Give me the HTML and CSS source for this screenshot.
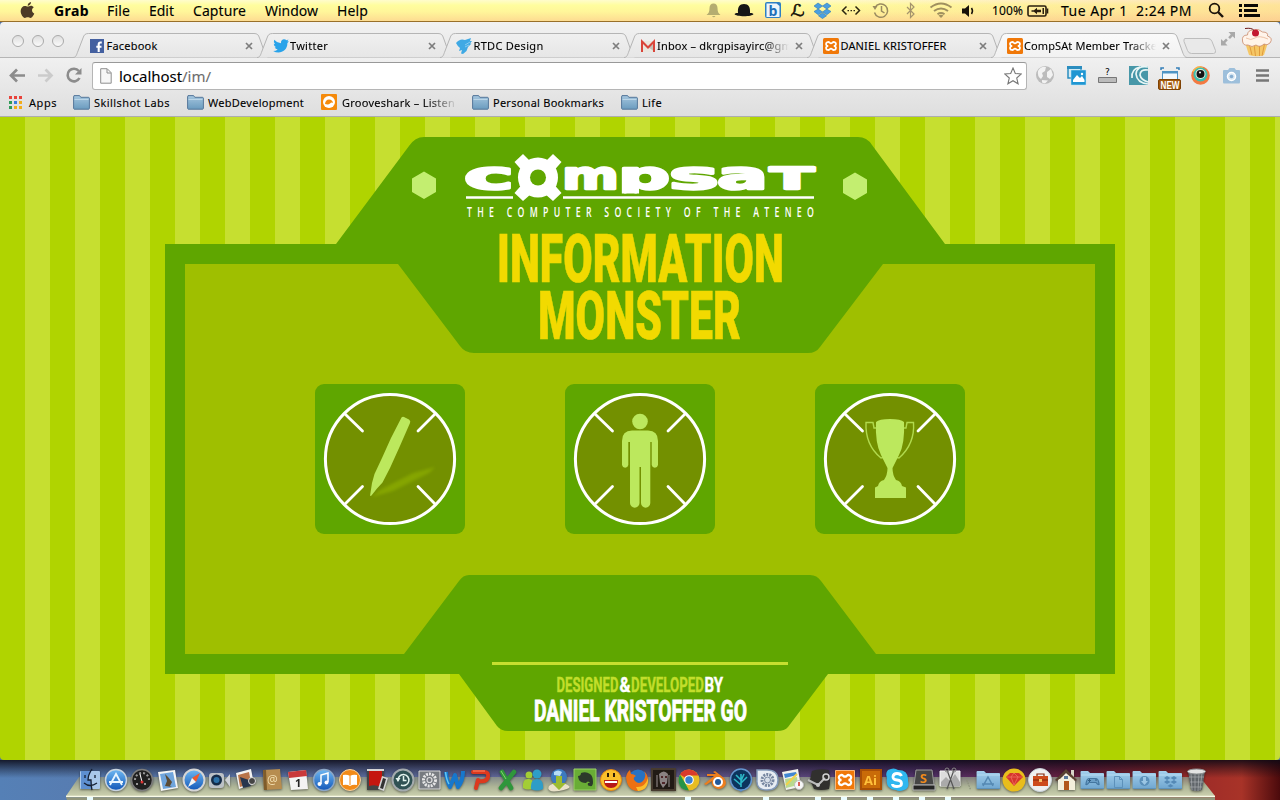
FILE: index.html
```html
<!DOCTYPE html>
<html lang="en">
<head>
<meta charset="utf-8">
<title>CompSAt Member Tracker</title>
<link rel="stylesheet" href="styles.css">
</head>
<body>
<svg class="defs" width="0" height="0">
  <defs>
    <linearGradient id="gFolder" x1="0" y1="0" x2="0" y2="1"><stop offset="0" stop-color="#a5c6de"/><stop offset="1" stop-color="#6b9cbf"/></linearGradient>
    <linearGradient id="gDockFolder" x1="0" y1="0" x2="0" y2="1"><stop offset="0" stop-color="#a4cfec"/><stop offset="1" stop-color="#6fa6cf"/></linearGradient>
    <linearGradient id="gTab" x1="0" y1="0" x2="0" y2="1"><stop offset="0" stop-color="#f0f0f0"/><stop offset="1" stop-color="#e6e6e6"/></linearGradient>
    <linearGradient id="gTabOn" x1="0" y1="0" x2="0" y2="1"><stop offset="0" stop-color="#fafafa"/><stop offset="1" stop-color="#f1f1f1"/></linearGradient>
    <linearGradient id="gBlue" x1="0" y1="0" x2="0" y2="1"><stop offset="0" stop-color="#6fb8f2"/><stop offset="1" stop-color="#1257b8"/></linearGradient>
    <linearGradient id="gShelf" x1="0" y1="0" x2="0" y2="1"><stop offset="0" stop-color="#8d9486" stop-opacity=".8"/><stop offset=".5" stop-color="#adb496"/><stop offset="1" stop-color="#cbd0ae"/></linearGradient>
    <symbol id="folder" viewBox="0 0 17 15"><path d="M.6 13.400V2l.4-1.400h5.600l1.200 1.700h8l.6.800v10.300l-.6.800H1.200z" fill="url(#gFolder)" stroke="#55779a" stroke-width="1"/><path d="M1.500 4.500h14" stroke="#bcd6e8"/></symbol>
    <symbol id="xampp" viewBox="0 0 16 16"><rect width="16" height="16" rx="1.500" fill="#f07808"/><path d="M5.200 8a2 2 0 1 1 1.400-3.300q1.400 1.300 2.800 0A2 2 0 1 1 10.800 8a2 2 0 1 1-1.400 3.300q-1.400-1.300-2.800 0A2 2 0 1 1 5.200 8z" fill="none" stroke="#fff" stroke-width="1.800"/></symbol>
    <symbol id="tab" viewBox="0 0 198 26"><path d="M0 24.500C3 24.500 3.500 22 5 18L10 5C11 2 12 .5 15.500 .5H181c3.500 0 4.500 1.500 5.500 4.500L191.500 19c1.500 4 2.500 5.500 5 5.500" stroke="#b5b5b5"/></symbol>
    <symbol id="close" viewBox="0 0 8 8"><path d="M1 1l6 6M7 1L1 7" stroke="#7d7d7d" stroke-width="1.700"/></symbol>
    <symbol id="scope" viewBox="0 0 150 150"><circle cx="75" cy="75" r="64.600" fill="#739000" stroke="#fff" stroke-width="3"/><path d="M30 30l17.500 17M120 30l-17 17M30 120l17.500-17.500M120 120l-17-17.500" stroke="#fff" stroke-width="2.800" stroke-linecap="round"/></symbol>
    <symbol id="dockFolder" viewBox="0 0 26 26"><path d="M1.500 5q0-1 1-1h6.500l2 2h13q1 0 1 1v14q0 1-1 1H2.500q-1 0-1-1z" fill="url(#gDockFolder)"/><path d="M2 8h23" stroke="#b7dcf2"/><path d="M2 21.500h23" stroke="#5f93bb"/></symbol>
  </defs>
</svg>

<header class="menubar">
  <svg class="apple" viewBox="0 0 16 18"><path d="M11.800 0c.1 2-1.700 4-3.600 4C8 2.200 9.800.2 11.800 0zM8.300 4.800c.9 0 1.900-.9 3.300-.9 1.200 0 2.400.7 3.100 1.700-2.800 1.700-2.300 5.400.5 6.600-.6 1.700-2.300 4.800-4 4.800-1.200 0-1.600-.7-3-.7s-1.900.7-3 .7C3.200 17 .700 12.900.700 9.600c0-3.400 2.200-5.500 4.400-5.500 1.300 0 2.300.7 3.200.7z" fill="#4d3b26"/></svg>
  <nav class="menus">
    <b data-w="35">Grab</b><span data-w="23">File</span><span data-w="25">Edit</span><span data-w="53">Capture</span><span data-w="53">Window</span><span data-w="31">Help</span>
  </nav>
  <svg class="status" viewBox="700 0 280 22">
    <path d="M713.500 3.500c2.500 0 4 2 4 4.500 0 4 1 5.500 3 7h-14c2-1.500 3-3 3-7 0-2.500 1.500-4.500 4-4.500zM712 16h3.500q-1.700 2.500-3.500 0z" fill="#b5ad70"/>
    <path d="M738 13C737.500 7 739.500 4 744 4s6.500 3 6 9c2 0 3 .5 3.500 1-1 3-18 3-19 0 .500-.5 1.500-1 3.500-1z" fill="#161616"/>
    <rect x="765" y="2" width="16" height="16" rx="2" fill="#2f80c3"/><path d="M766.500 17h13V6l-3-2.500h-10z" fill="#fff" opacity=".92"/><text x="768.500" y="15.500" class="bglyph">b</text>
    <text x="790.500" y="16" class="lglyph" textLength="14" lengthAdjust="spacingAndGlyphs">ℒ</text>
    <path d="M818 3l4.500 3-4.300 3-4.200-3zM827 3l4 3-4.200 3-4.300-3zM814 11.500l4.200-2.500 4.300 3-4.200 2.800zM831 11.500L826.800 9l-4.300 3 4.300 2.800zM822.500 13l4 2.800-4 2.700-4-2.700z" fill="#4a9fe0" stroke="#2a78b8" stroke-width=".6"/>
    <path d="M846.500 6.500l-4 4 4 4M855.500 6.500l4 4-4 4" fill="none" stroke="#2b2510" stroke-width="1.500"/><path d="M847.500 10h1.500v1.200h-1.500zm3 0h1.500v1.200h-1.500zm3 0h1.500v1.200h-1.500z" fill="#2b2510"/>
    <path d="M875 7.500a6.700 6.700 0 1 1-.5 5M881.500 6v5l3 2" fill="none" stroke="#9a8b60" stroke-width="1.500"/><path d="M872.500 6h5l-2.500 4z" fill="#9a8b60"/>
    <path d="M907 7l7 7-3.500 3.500v-14L914 7l-7 7" fill="none" stroke="#a5946c" stroke-width="1.200"/>
    <path d="M930.500 7.500q10.500-8 21 0M934 11q7-5 14 0M937.500 14.200q3.500-2.500 7 0" fill="none" stroke="#a0905f" stroke-width="2"/><path d="M938.500 15.500q2.500-1.500 5 0L941 18z" fill="#a0905f"/>
    <path d="M962 8.500h3L969 5v12l-4-3.500h-3z" fill="#161009"/><path d="M971.500 8q2 3 0 6" fill="none" stroke="#161009" stroke-width="1.500"/>
  </svg>
  <span class="pct" data-w="31">100%</span>
  <svg class="battery" viewBox="0 0 22 12"><rect x="1" y="1" width="18" height="10" rx="1.500" fill="none" stroke="#2a1e0e" stroke-width="1.600"/><path d="M20.500 3.500v5" stroke="#2a1e0e" stroke-width="1.600"/><path d="M4.500 5.300H7L10 2.800v2h4v2.400h-4v2L7 6.700H4.500z" fill="#2a1e0e"/><path d="M15.500 3h1.500v6h-1.500z" fill="#2a1e0e"/></svg>
  <span class="clock" data-w="131">Tue Apr 1&nbsp; 2:24 PM</span>
  <svg class="tools" viewBox="1208 0 54 22"><circle cx="1214.500" cy="8.500" r="4.800" fill="none" stroke="#1c140b" stroke-width="1.800"/><path d="M1218 12l5 5" stroke="#1c140b" stroke-width="2.400"/><path d="M1239 5.500h3m2 0h14m-19 5h3m2 0h13m-18 5h3m2 0h16" stroke="#0c0905" stroke-width="2.800"/></svg>
</header>

<section class="chrome">
  <div class="tabstrip">
    <div class="lights"><i></i><i></i><i></i></div>
    <div class="tabs">
      <div class="tab"><svg class="shape"><use href="#tab" fill="url(#gTab)"/></svg>
        <svg class="fav" viewBox="0 0 16 16"><rect x="1" y="1" width="14" height="14" fill="#4460a0"/><path d="M12.800 4.500h-1.300q-1.800 0-1.800 2V14M7.300 8.800h5.200" fill="none" stroke="#fff" stroke-width="2.100"/></svg>
        <p><span data-w="51">Facebook</span></p><svg class="x"><use href="#close"/></svg></div>
      <div class="tab"><svg class="shape"><use href="#tab" fill="url(#gTab)"/></svg>
        <svg class="fav" viewBox="0 0 16 16"><path d="M16 3.600q-.800.8-1.600 1.400C14.500 11 10 14.500 5.500 14.500q-3 0-5.300-1.500 2.800 0 4.500-1.500-2.300-.300-3-2.300h1.400Q.700 8 .700 5.800l1.400.400Q0 4.300 1.200 1.700 4 5 8 5.200C7.600 2.500 9.500 1.300 11 1.300q1.500 0 2.500 1l2-.700-1.200 1.700z" fill="#29a3ea"/></svg>
        <p><span data-w="38">Twitter</span></p><svg class="x"><use href="#close"/></svg></div>
      <div class="tab"><svg class="shape"><use href="#tab" fill="url(#gTab)"/></svg>
        <svg class="fav" viewBox="0 0 16 16"><path d="M0 5q4-5 9-3l6-2-1 3h2l-2 2.500h1.500L12 9l-1.500 4L7 16l-2-.500 1-3.500-3 1 1-3Q2 9 0 5z" fill="#3fa9e4"/><path d="M9 7l5-3M9 9l4-2" stroke="#9bd6f6" fill="none" stroke-width=".8"/></svg>
        <p><span data-w="70">RTDC Design</span></p><svg class="x"><use href="#close"/></svg></div>
      <div class="tab"><svg class="shape"><use href="#tab" fill="url(#gTab)"/></svg>
        <svg class="fav" viewBox="0 0 16 16"><path d="M1 3h14v11H1z" fill="#e9e6df"/><path d="M8 9l7 5V5z" fill="#c4c0b8"/><path d="M2 14V3.500l6 6 6-6V14" fill="none" stroke="#d9453a" stroke-width="2"/></svg>
        <p><span data-w="135">Inbox – dkrgpisayirc@gm</span></p><svg class="x"><use href="#close"/></svg></div>
      <div class="tab"><svg class="shape"><use href="#tab" fill="url(#gTab)"/></svg>
        <svg class="fav"><use href="#xampp"/></svg>
        <p><span data-w="106">DANIEL KRISTOFFER</span></p><svg class="x"><use href="#close"/></svg></div>
      <div class="tab on"><svg class="shape"><use href="#tab" fill="url(#gTabOn)"/></svg>
        <svg class="fav"><use href="#xampp"/></svg>
        <p><span data-w="133">CompSAt Member Tracke</span></p><svg class="x"><use href="#close"/></svg></div>
    </div>
    <svg class="corner" viewBox="1180 22 100 36">
      <path d="M1186 38.500h22q3 0 4 3l3.500 9q.500 3-2 3h-22q-3 0-4-3l-3.500-9q-.500-3 1-3z" fill="#e9e9e9" stroke="#bdbdbd"/>
      <path d="M1235 32v6.500l-2.300-2.200-2.700 2.700-1.800-1.800 2.600-2.600L1228.500 32zM1221 45.500v-6.500l2.300 2.200 2.700-2.700 1.800 1.800-2.600 2.600 2.300 2.600z" fill="#a9a9a9"/>
      <path d="M1244.500 41l4.500 14q8 2.500 15 0l4.500-14z" fill="#f5c766"/><path d="M1249 43l3 12m2-11l1.500 12m4-11v11m5-12l-2.500 12" stroke="#e09b3d" fill="none"/>
      <path d="M1242.500 41q-1-6 5-6 0-5 6-5 5-2 9 2 6 0 5 4 6 2 2.500 7-3 3-6 1-4 4-8 1-4 3-8 0-5 1-5.500-4z" fill="#fff4ea" stroke="#c98a6c" stroke-width=".8"/><path d="M1246 38q5 3 9 0t13 1" stroke="#edc4a9" fill="none"/>
      <circle cx="1255.500" cy="33" r="3.500" fill="#c3182f"/><path d="M1245 28.500q7-1 9 2" stroke="#6d1a1a" fill="none"/>
    </svg>
  </div>

  <div class="toolbar">
    <svg class="nav" viewBox="0 60 92 30">
      <path d="M11 75.500h14M17 69.500l-6 6 6 6" fill="none" stroke="#8c8c8c" stroke-width="2.700"/>
      <path d="M38 75.500h13M45.500 69.500l6 6-6 6" fill="none" stroke="#cbcbcb" stroke-width="2.700"/>
      <path d="M78.800 71A6.300 6.300 0 1 0 79.500 78" fill="none" stroke="#8c8c8c" stroke-width="2.600"/><path d="M81.500 68v6.500H75z" fill="#8c8c8c"/>
    </svg>
    <div class="omnibox">
      <svg class="doc" viewBox="0 0 12 16"><path d="M.7.7h6.500l4 4v10.500H.7z" fill="#f7f7f7" stroke="#8f8f8f"/><path d="M7 1v4h4" fill="none" stroke="#8f8f8f"/></svg>
      <p class="url"><span data-w="92">localhost<em>/im/</em></span></p>
      <svg class="star" viewBox="0 0 18 18"><path d="M9 1l2.300 5.500 6 .500-4.600 4 1.400 5.800L9 13.700l-5.100 3.100L5.300 11 .700 7l6-.500z" fill="#fff" stroke="#777" stroke-width="1.100"/></svg>
    </div>
    <svg class="exts" viewBox="1027 60 253 32">
      <circle cx="1045" cy="75" r="9" fill="#bcbcbc"/><path d="M1038 71q3-5 8-4l-1 4-3 2 1 3-2 3q-4-3-3-8zM1047 72l4-3 2 6-3 4-3-2zM1042 80l6 .500-3 3-3-1z" fill="#f2f2f2"/>
      <path d="M1068 67h13v11h-13z" fill="#d5ebf4" stroke="#2a8dbf" stroke-width="1.500"/><path d="M1067 66h15v3h-15z" fill="#2a8dbf"/><path d="M1071 70h15v15h-15z" fill="#1f96d2" stroke="#bfe4f5" stroke-width=".5"/><path d="M1073 82v-2l4-5 3 3 2-2 2.500 4v2z" fill="#fff"/><circle cx="1082" cy="74" r="1.200" fill="#fff"/>
      <text x="1105" y="75" class="qglyph">?</text><path d="M1098.500 77.500h18v5h-18z" fill="#bbb" stroke="#777"/>
      <path d="M1129 66h19v19h-19z" fill="#4797a8"/><path d="M1148 67q-11-2-12 7 1 9 12 10M1148 70q-8-1-8 5 1 5 8 7M1140 67q-9 2-8 11" fill="none" stroke="#e8f6f6" stroke-width="1.700"/>
      <path d="M1161 70v-2h3m12 0h3v2" fill="none" stroke="#347fb8" stroke-width="1.500"/><path d="M1162.500 71.500h15v8h-15z" fill="#f4f8fb" stroke="#4f94c4"/><path d="M1162 71h16v2.500h-16z" fill="#4f94c4"/><rect x="1158.500" y="79.500" width="22" height="10" rx="1.500" fill="#a35a0d" stroke="#7e4205"/><text x="1160.500" y="88.500" class="newtag" textLength="19" lengthAdjust="spacingAndGlyphs">NEW</text>
      <circle cx="1200.500" cy="75.500" r="9.300" fill="#f37a42"/><path d="M1192 72q4-8 11-5l-2 4z" fill="#f9b44a"/><circle cx="1200.500" cy="74.500" r="7" fill="#3fbfae"/><circle cx="1200.500" cy="74" r="5" fill="#e8efe0"/><circle cx="1200.500" cy="74" r="4" fill="#131313"/><circle cx="1200" cy="72.500" r="1" fill="#fff"/>
      <path d="M1223 71q0-1 1-1h4l1.500-2h5l1.500 2h3q1 0 1 1v11q0 1.500-1 1.500h-15q-1 0-1-1.500z" fill="#9dbfdb"/><circle cx="1231.500" cy="76.500" r="4" fill="#d6e6f2" stroke="#fff" stroke-width="1.500"/><circle cx="1231.500" cy="76.500" r="1.800" fill="#86add0"/>
      <path d="M1256 70.500h13m-13 5h13m-13 5h13" stroke="#777" stroke-width="2.600"/>
    </svg>
  </div>

  <div class="bookmarks">
    <svg class="apps" viewBox="0 0 13 13"><path d="M0 0h3v3H0zM5 0h3v3H5zM10 0h3v3h-3z" fill="#e8423a"/><path d="M0 5h3v3H0z" fill="#2f9b57"/><path d="M5 5h3v3H5z" fill="#3a7ddb"/><path d="M10 5h3v3h-3zM5 10h3v3H5zM10 10h3v3h-3z" fill="#f2ac1a"/><path d="M0 10h3v3H0z" fill="#2f9b57"/></svg>
    <span class="bm apps-t" data-w="28">Apps</span>
    <svg class="fold"><use href="#folder"/></svg><span class="bm" data-w="76">Skillshot Labs</span>
    <svg class="fold"><use href="#folder"/></svg><span class="bm" data-w="96">WebDevelopment</span>
    <svg class="groove" viewBox="0 0 16 16"><rect width="16" height="16" rx="1" fill="#f58a0b"/><circle cx="8" cy="8" r="6" fill="#fff"/><path d="M4 10q.5-4.500 4-4.500T12 9q-1.500-1-3 .5T4 10z" fill="#f58a0b"/></svg><span class="bm cut"><span data-w="113">Grooveshark – Listen</span></span>
    <svg class="fold"><use href="#folder"/></svg><span class="bm" data-w="111">Personal Bookmarks</span>
    <svg class="fold"><use href="#folder"/></svg><span class="bm" data-w="20">Life</span>
  </div>
</section>

<main class="page">
  <svg class="frame" viewBox="0 117 1280 643">
    <path d="M165 244H336L409 146Q415 137 424 137H858Q867 137 872 145L945 244H1115V674H828L788 727Q785 731 777 731H508Q501 731 497 726L459 674H165z" fill="#5fa600"/>
    <path d="M185 264H398L460 346Q465 353 474 353H808Q816 353 820 347L883 264H1095V654H876L821 581Q817 575 810 575H469Q463 575 459 581L404 654H185z" fill="#9fbf00"/>
  </svg>
  <svg class="logo" viewBox="408 150 464 72">
    <path d="M424 171.500l12 7v13.500l-12 7-12-7v-13.500zM855 172.500l12 7V193l-12 7-12-7v-13.500z" fill="#c3ee70"/>
    <clipPath id="pclip"><path d="M400 150h480v43.500H400z"/></clipPath>
    <g class="mark" clip-path="url(#pclip)">
      <text x="464" y="188.500" textLength="50" lengthAdjust="spacingAndGlyphs">c</text>
      <text x="562" y="188.500" textLength="57" lengthAdjust="spacingAndGlyphs">m</text>
      <text x="618" y="188.500" textLength="52" lengthAdjust="spacingAndGlyphs">p</text>
      <text x="669" y="188.500" textLength="50" lengthAdjust="spacingAndGlyphs">s</text>
      <text x="717" y="188.500" textLength="51" lengthAdjust="spacingAndGlyphs">a</text>
      <text class="cap" x="770" y="188.500" textLength="44" lengthAdjust="spacingAndGlyphs">T</text>
    </g>
    <path d="M514.500 162l8.500-8 8 8h14l8-8 8.500 8-7 8v15l7 8-8.500 8-8-7h-14l-8 7-8.500-8 7-8v-15z" fill="#fff"/><circle cx="538" cy="177.500" r="20" fill="#fff"/>
    <circle cx="538" cy="177.500" r="8" fill="#5fa600"/>
    <path d="M466 197.500h47M563 197.500h251" stroke="#fff" stroke-width="2.400"/>
    <text class="tagline" transform="translate(467 217) scale(.6 1)" textLength="578" lengthAdjust="spacing">THE COMPUTER SOCIETY OF THE ATENEO</text>
  </svg>
  <h1><svg class="title" viewBox="495 230 291 115">
    <text x="497" y="282" textLength="287" lengthAdjust="spacingAndGlyphs">INFORMATION</text>
    <text x="538" y="339" textLength="203" lengthAdjust="spacingAndGlyphs">MONSTER</text>
  </svg></h1>
  <nav class="tiles">
    <a class="tile"><svg viewBox="0 0 150 150"><use href="#scope"/>
      <defs><filter id="soft" x="-20%" y="-40%" width="140%" height="180%"><feGaussianBlur stdDeviation="1.600"/></filter></defs>
      <path d="M57 113L65 106 98 89 120 83 114 89 78 107z" fill="#8aaa00" filter="url(#soft)" opacity=".8"/>
      <path d="M86.500 33.500Q87.500 32.500 89 33L94 35.500Q96 37 95 39L84.500 63 75 84 67.500 98.500 62 104.500 56.500 111.500 55 112 57 99 59.500 90 67 74 76 54z" fill="#bce85d"/></svg></a>
    <a class="tile"><svg viewBox="0 0 150 150"><use href="#scope"/>
      <g fill="#bce85d"><circle cx="75" cy="37.500" r="7.800"/><path d="M67 46.500H83Q93 46.500 93 57V81a3.200 3.200 0 0 1-6.300 0V58h-1.400V119a4.300 4.300 0 0 1-9.300 0V83h-1.500V119a4.300 4.300 0 0 1-9.500 0V58H63.300V81a3.200 3.200 0 0 1-6.300 0V57Q57 46.500 67 46.500z"/></g></svg></a>
    <a class="tile"><svg viewBox="0 0 150 150"><use href="#scope"/>
      <path d="M62 44h-3l-1-5.500h-7Q50 61 66 74l2-.500M88 44h3l1-5.500h6.500Q100 60 84 74l-2-.500" fill="none" stroke="#b1da4d" stroke-width="1.400"/>
      <path d="M61 38Q64 35 75 35T89 38Q90 60 84 71L77.500 84Q77.500 91 81 96 86 97 87 102L91 103.500V114H60V103.500L63 102Q64 97 69 96 72.500 91 72.500 84L66 71Q60 59 61 38z" fill="#bce85d"/></svg></a>
  </nav>
  <footer class="credit">
    <svg viewBox="490 660 300 68"><path d="M492 663.500h296" stroke="#c6df30" stroke-width="3"/>
      <g class="by">
        <text class="lime" x="556.500" y="692" textLength="62" lengthAdjust="spacingAndGlyphs">DESIGNED</text>
        <text x="619.500" y="692" textLength="11" lengthAdjust="spacingAndGlyphs">&amp;</text>
        <text class="lime" x="631" y="692" textLength="73" lengthAdjust="spacingAndGlyphs">DEVELOPED</text>
        <text x="704.500" y="692" textLength="18.500" lengthAdjust="spacingAndGlyphs">BY</text>
      </g>
      <text class="name" x="534" y="721" textLength="213" lengthAdjust="spacingAndGlyphs">DANIEL KRISTOFFER GO</text></svg>
  </footer>
</main>

<section class="desktop">
  <svg class="shelf" viewBox="0 760 1280 40"><path d="M79 777H1200L1215 796H66z" fill="url(#gShelf)"/><path d="M66 796.500H1215" stroke="#fafbe8" stroke-width="1.500"/><path d="M66 797.300H1215V800H67z" fill="#92967b"/></svg>
  <div class="dock">
    <svg><rect x="3" y="4" width="20" height="18" rx="1" fill="#a9c8ea"/><path d="M4 4h10q-3 4-3 9h3l1 9H4z" fill="#5d8fd0"/><path d="M15 2q-4 6-4 11h3q0 6 1 10M7 16q6 5 13 0M8 8v3m10-3v3" fill="none" stroke="#152033" stroke-width="1.300"/></svg>
    <svg><circle cx="13" cy="13" r="10.500" fill="url(#gBlue)" stroke="#c7d3df" stroke-width="1.500"/><path d="M7 18l6-11 6 11M6 15h14" fill="none" stroke="#e8f5ff" stroke-width="1.800"/></svg>
    <svg><circle cx="13" cy="13" r="10.500" fill="#202020" stroke="#7d7d7d" stroke-width="1.500"/><path d="M6 13a7 7 0 0 1 14 0M7 17h4m4 0h4" stroke="#999" stroke-dasharray="2 2" fill="none" stroke-width="2"/><path d="M13 15l-2-8" stroke="#fff"/><circle cx="13" cy="15" r="1.500" fill="#d33"/></svg>
    <svg><path d="M3 5l17-2 3 18-17 3z" fill="#f4f4f4"/><path d="M5 7l13-2 3 15-13 2z" fill="#6fa4dc"/><path d="M10 7l3 3 4 5-2 4 2 1-7-1 2-5z" fill="#5c4b35"/></svg>
    <svg><circle cx="13" cy="13" r="10.500" fill="url(#gBlue)" stroke="#d5d5d5" stroke-width="2"/><path d="M19 6l-4 9-4-4z" fill="#f05a2c"/><path d="M7 20l4-9 4 4z" fill="#f4f4f4"/></svg>
    <svg><rect x="2" y="6" width="15" height="15" rx="3" fill="#bcc1c6"/><circle cx="9.500" cy="13" r="5.500" fill="#142b48"/><circle cx="9.500" cy="13" r="3" fill="#2d71a7"/><path d="M18 13l5-6v13z" fill="#cfd2d5"/></svg>
    <svg><path d="M3 6l15-4 3 15-15 5z" fill="#f2f2f2"/><path d="M5 8l11-3 2 11-11 4z" fill="#b8744a"/><path d="M7 10l9 3 2 6-8 2z" fill="#27364e"/><circle cx="19" cy="14" r="3.500" fill="#444" stroke="#ddd"/></svg>
    <svg><path d="M4 3l17-1 2 20-18 1z" fill="#b78d4f"/><path d="M4 3l3 0 1 20H5z" fill="#7f5c2a"/><text x="8" y="17" class="at">@</text></svg>
    <svg><path d="M3 5l18-2 2 19-17 1z" fill="#f3f3f3"/><path d="M3 5l18-2 1 6-18 2z" fill="#c9393b"/><text x="10" y="20" class="day">1</text></svg>
    <svg><circle cx="13" cy="13" r="10.500" fill="url(#gBlue)" stroke="#8ba6c6" stroke-width="1.500"/><path d="M10 17V8l7-2v9" fill="none" stroke="#fff" stroke-width="1.500"/><circle cx="8.500" cy="17" r="2" fill="#fff"/><circle cx="15.500" cy="15.500" r="2" fill="#fff"/></svg>
    <svg><circle cx="13" cy="13" r="10.500" fill="#f28a18" stroke="#f8d2a0"/><path d="M6 8q4-1 7 1 3-2 7-1v10q-4-1-7 1-3-2-7-1z" fill="#fff"/><path d="M13 9v9" stroke="#f28a18"/></svg>
    <svg><path d="M3 2h17v21H3z" fill="#444"/><path d="M5 4h13v17q-5-4-13-2z" fill="#c5160f"/><path d="M3 2h17v2H3zM14 22l4-13 6 2-4 13z" fill="#d5d5d5"/><path d="M16 21l3-10 3 1-3 10z" fill="#333"/></svg>
    <svg><circle cx="13" cy="13" r="10.500" fill="#2f5153" stroke="#a4abae" stroke-width="2"/><path d="M8 14a5.500 5.500 0 1 1 3 4M13.500 9v4.500h3" fill="none" stroke="#e3f3ee" stroke-width="1.500"/><path d="M5.500 11l5 0-2.500 4z" fill="#e3f3ee"/></svg>
    <svg><path d="M3 4h21v18H3z" fill="#777b80" stroke="#d8d8d8"/><circle cx="13.500" cy="13" r="6" fill="none" stroke="#e6e6e6" stroke-width="3" stroke-dasharray="2 1"/><circle cx="13.500" cy="13" r="2.500" fill="none" stroke="#ddd" stroke-width="1.200"/></svg>
    <svg><path d="M4 5q1 10 4 15l5-12 3 12q5-6 5-16" fill="none" stroke="#1777cc" stroke-width="4" stroke-linejoin="round"/><path d="M3.500 5q1 8 3.500 12" stroke="#62c7f4" fill="none" stroke-width="1.500"/></svg>
    <svg><path d="M5 5h11q5 0 4 5t-9 4M10 13l-2 8" fill="none" stroke="#dc391e" stroke-width="4" stroke-linecap="round"/><path d="M5 4h12" stroke="#ff8b66"/></svg>
    <svg><path d="M8 5l9 16M20 5L7 21" fill="none" stroke="#2f963b" stroke-width="4.600" stroke-linecap="round"/><path d="M7 4l5 8" stroke="#83d66b"/></svg>
    <svg><circle cx="9" cy="8" r="3.500" fill="#a3cd35"/><path d="M3 21q-1-10 6-9 5 0 5 9-6 3-11 0z" fill="#a3cd35"/><circle cx="17" cy="7" r="4.500" fill="#2e9dc8"/><path d="M11 22q-1-10 6-10t6 10q-6 3-12 0z" fill="#2e9dc8"/></svg>
    <svg><circle cx="13" cy="10" r="8" fill="#3c79be"/><path d="M8 5q4-3 8 0l-2 4-6-1z" fill="#b5dcf5"/><path d="M3 19q3-3 10-3t10 3-10 5-10-5z" fill="#e9e1c8"/><path d="M10 9h6v7h4l-7 7-7-7h4z" fill="#9bbb30"/></svg>
    <svg><path d="M2 2h22v21H2z" fill="#69ad35" stroke="#9bd068"/><path d="M9 6q5-2 9 1 3 2 3 8 0 5-3 4-3 0-2-3h2q-2-3-4 0-5 0-7-3-1-3-1-4 3 0 3-3z" fill="#2c3a2b"/></svg>
    <svg><circle cx="13" cy="13" r="10.500" fill="#fbc02a" stroke="#e48914"/><path d="M6 13h14q0 8-7 8t-7-8z" fill="#b71717"/><path d="M7 14h12v2H7z" fill="#fff"/><path d="M10 6v4m6-4v4" stroke="#2f1d05" stroke-width="2"/></svg>
    <svg><circle cx="14" cy="12" r="9.500" fill="#2872c2"/><path d="M2 10q1-5 4-7l1 4q3 0 5 2-4 2-1 5 4 4 8 0 4-5 1-10 5 5 4 11-2 9-11 9-10-1-11-14z" fill="#ec7114"/><path d="M12 20q9 1 12-9 1 12-10 13z" fill="#fbbf2c"/></svg>
    <svg><path d="M2 2h23v21H2z" fill="#211a15" stroke="#473b2f" stroke-width="2"/><path d="M9 7q5-5 9 0l-1 9-4 5-3-5z" fill="#8b8283"/><path d="M11 10h2m2 0h2M12 16h3" stroke="#3c080d" stroke-width="1.500"/><path d="M7 8v12m12-12v12" stroke="#5e5654" stroke-width="2"/></svg>
    <svg><circle cx="13" cy="13" r="10.500" fill="#e7bd21"/><path d="M13 13L4 7.500Q7 2.500 13 2.500T22.500 8.500H13z" fill="#d93a2b"/><path d="M4 7.500L9 16l4 7.500Q2.500 23 2.500 13q0-3 1.500-5.500z" fill="#259448"/><circle cx="13" cy="13" r="4.800" fill="#fff"/><circle cx="13" cy="13" r="3.700" fill="#397fd1"/></svg>
    <svg><path d="M2 17L12 9H5V7h9l-3-2 2-1 9 7q4 5 0 9-5 4-10 0-3-3-2-6l-6 4z" fill="#ed7e1d"/><circle cx="16" cy="15" r="5" fill="#fff"/><circle cx="16" cy="15" r="3" fill="#21599b"/></svg>
    <svg><path d="M9 21h8l-4 4z" fill="#5485c4"/><circle cx="13" cy="12.500" r="10.500" fill="#0c345e" stroke="#6596d0" stroke-width="1.500"/><path d="M13 20V7m0 6L8 8m5 8l6-6m-6 8l-7-6m7 2l3-7" stroke="#2cb8c8" stroke-width="1.600" fill="none"/></svg>
    <svg><path d="M3 3h10q11 0 11 10t-11 10T3 13z" fill="#e8edf3" stroke="#8299b9" stroke-width="1.500"/><circle cx="13.500" cy="13" r="5.500" fill="none" stroke="#7686a0" stroke-width="3" stroke-dasharray="2 1"/><circle cx="13.500" cy="13" r="3" fill="#d7dfe9" stroke="#7686a0"/></svg>
    <svg><path d="M2 5l16-3 3 18-15 3z" fill="#f1f1ed"/><path d="M4 7l12-2 1 3-12 3z" fill="#4187d2"/><path d="M5 12l12-2 1 8-12 3z" fill="#b8d98f"/><path d="M6 18L17 7" stroke="#f3d147" stroke-width="2"/><circle cx="19" cy="18" r="4.500" fill="#f7f7f7" stroke="#c0c0c0"/><path d="M19 15v4" stroke="#d12c21" stroke-width="1.500"/></svg>
    <svg><path d="M6 4q7-3 17-1 2 11 0 19-8 2-15 0L4 13z" fill="#31302e"/><path d="M2 13l10 5 7-7" stroke="#bababa" stroke-width="2" fill="none"/><circle cx="20" cy="10" r="3" fill="none" stroke="#d2d2d2" stroke-width="1.500"/><circle cx="12" cy="18" r="2" fill="#c6c6c6"/></svg>
    <svg><use href="#xampp" x="3" y="3" width="20" height="20"/><path d="M3.500 3.500h19v19h-19z" fill="none" stroke="#f8b77a"/></svg>
    <svg><path d="M2 2h22v21H2z" fill="#a84f06"/><path d="M4 4h18v17H4z" fill="#c96b08"/><text x="6" y="18" class="ai">Ai</text></svg>
    <svg><path d="M4 3q6-3 10 0 11 0 10 11 2 7-4 9-5 2-8 0Q1 22 3 11 1 6 4 3z" fill="#2fb7ef"/><path d="M17.500 9q-1-2.500-4.500-2.500T9 9.500t4 3.500 4.500 3.500T13 19.500 8.500 17" fill="none" stroke="#fff" stroke-width="2.800"/></svg>
    <svg><path d="M5 3h16l2 15H3z" fill="#464646" stroke="#999"/><path d="M2 18h22v5H2z" fill="#262626" stroke="#b5b5b5"/><text x="9" y="16" class="sub">S</text></svg>
    <svg><path d="M3 4h20v15H3z" fill="#ddd" stroke="#f5f5f5"/><path d="M4 15l5-5 4 4 5-7 5 8v4H4z" fill="#aaa"/><path d="M10 3l7 19M17 3l-7 19" stroke="#555" stroke-width="1.200"/><circle cx="10" cy="3" r="2" fill="none" stroke="#888"/><circle cx="17" cy="3" r="2" fill="none" stroke="#888"/></svg>
    <svg class="divider" viewBox="0 0 13 26"><path d="M4 13l4 10" stroke="#8b907a" stroke-width="1.200" stroke-dasharray="2 1"/></svg>
    <svg><use href="#dockFolder"/><path d="M8 19l5-9 5 9M7 17h12" fill="none" stroke="#5488b2" stroke-width="1.500"/></svg>
    <svg><circle cx="13" cy="13" r="11.500" fill="#e9bd1c"/><path d="M5 10l4-4h9l4 4-9 9z" fill="#d6352d"/><path d="M6 10h15M10 10l3 8 4-8-4-4z" stroke="#f47565" fill="none" stroke-width=".7"/></svg>
    <svg><circle cx="13" cy="13" r="11.500" fill="#eff0f0" stroke="#c8d2da"/><path d="M6 9h15v10H6z" fill="#cd4b1c"/><path d="M10 9V7h7v2M6 13h15" fill="none" stroke="#82290c" stroke-width="1.200"/><path d="M12 12h3v3h-3z" fill="#f7c16a"/></svg>
    <svg><path d="M18 3h3v8h-3z" fill="#d8d5c8"/><path d="M5 12h17v11H5z" fill="#f3efdc"/><path d="M2 13L13 2l11 11-2 1-9-8-9 8z" fill="#594131"/><path d="M13 6l8 7H6z" fill="#f3efdc"/><path d="M11 14h5v9h-5z" fill="#b2571b"/><path d="M11 9h4v3h-4z" fill="#5b799a"/></svg>
    <svg><use href="#dockFolder"/><path d="M7 17.500q.5-6 3-6h7q2.500 0 3 6-1.500.5-3-2h-7q-1.500 2.500-3 2z" fill="#6a9ec6" stroke="#44769f" stroke-width="1.200"/><path d="M9 13.500h3m-1.500-1.500v3M16 13h2" stroke="#335f85"/></svg>
    <svg><use href="#dockFolder"/><path d="M9.500 9.500h5l3 3v8h-8zM14.500 9.500v3h3" fill="none" stroke="#5d91ba"/></svg>
    <svg><use href="#dockFolder"/><circle cx="13.500" cy="14" r="5" fill="#5a8fb9"/><path d="M12 10h3v4h2l-3.500 4-3.500-4h2z" fill="#9bc6e4"/></svg>
    <svg><use href="#dockFolder"/><path d="M10 9l3.500 2-3.500 2-3-2zM17 9l3 2-3 2-3.500-2zM7 15l3-2 3.500 2-3.500 2zM20 15l-3-2-3.500 2 3.500 2zM13.500 17l3 2-3 1.500-3-1.500z" fill="#5489b5"/></svg>
    <svg><path d="M5 4h17l-3 19q-5 2-11 0z" fill="#60656a"/><path d="M8 6l1 17m3-18v19m4-19l-1 19m4-18l-2 17M6 10h15M7 15h13M7 20h12" stroke="#a9adb0" stroke-width=".7"/><ellipse cx="13.500" cy="4.500" rx="9" ry="2.500" fill="#e3e3e3" stroke="#8f9294"/></svg>
  </div>
  <svg class="lamps" viewBox="0 795 1280 5"><path d="M87 797h6v3h-6zM685 797h6v3h-6zM763 797h6v3h-6zM815 797h6v3h-6zM841 797h6v3h-6zM867 797h6v3h-6zM893 797h6v3h-6zM919 797h6v3h-6zM945 797h6v3h-6z" fill="#e9fcff"/></svg>
</section>
<script src="fit.js"></script>
</body>
</html>
```
FILE: styles.css
```css
* { box-sizing: border-box; margin: 0; padding: 0; }
body { width: 1280px; height: 800px; overflow: hidden; display: flex; flex-direction: column; background: #4f6f9f; font-family: "Noto Sans", "Open Sans", sans-serif; color: #000; }
svg { display: block; flex: none; }
.defs { position: absolute; }
[data-w] { display: inline-block; white-space: nowrap; -webkit-text-stroke: .1px currentColor; }

/* menu bar */
.menubar { height: 22px; flex: none; display: flex; align-items: center; font-size: 14px; line-height: 20px; border-bottom: 1px solid #99702a;
  background: linear-gradient(to right, rgba(255,200,150,0) 60%, rgba(252,190,145,.4)), linear-gradient(#fffccc 0, #fffd9e 25%, #fff69a 55%, #fddc92 100%); }
.apple { width: 15px; height: 17px; margin-left: 20px; }
.menus { display: flex; gap: 19px; margin-left: 19px; width: 646px; }
.menus b { margin-right: -1px; }
.status { width: 280px; height: 22px; margin-right: 12px; }
.bglyph { font: bold 14px "Open Sans", sans-serif; fill: #1f70b8; }
.lglyph { font: italic 16px "DejaVu Serif", "DejaVu Sans", serif; fill: #141208; stroke: #141208; stroke-width: .5px; }
.pct { font-size: 12px; margin-right: 4px; }
.battery { width: 22px; height: 12px; margin-right: 12px; }
.clock { margin-right: 16px; }
.tools { width: 54px; height: 22px; }

/* browser chrome */
.chrome { height: 95px; flex: none; background: linear-gradient(#f2f2f2 0, #e6e6e6 35px, #f0f0f0 36px, #dedede 94px); border-bottom: 1px solid #adadad; border-radius: 4px 4px 0 0; }
.tabstrip { height: 36px; display: flex; border-bottom: 1px solid #b5b5b5; }
.lights { display: flex; gap: 8px; padding: 13px 0 0 12px; width: 75px; }
.lights i { width: 12px; height: 12px; border: 1px solid #aaa; border-radius: 50%; background: linear-gradient(#dedede, #fafafa); }
.tabs { display: flex; padding-top: 11px; width: 1105px; height: 36px; position: relative; }
.tab { position: relative; width: 183.500px; flex: none; height: 25px; display: flex; align-items: center; padding-left: 14px; font-size: 11px; line-height: 15px; }
.shape { position: absolute; left: -2px; top: 0; width: 198px; height: 26px; }
.shape use { width: 198px; height: 26px; }
.fav { position: relative; width: 16px; height: 16px; }
.tab p { position: relative; width: 132px; margin: 0 6px 0 1.500px; overflow: hidden; white-space: nowrap; -webkit-mask-image: linear-gradient(to right, #000 105px, transparent 132px); mask-image: linear-gradient(to right, #000 105px, transparent 132px); }
.tab:nth-child(5) p, .tab:nth-child(1) p { -webkit-mask-image: none; mask-image: none; }
.x { position: relative; width: 8px; height: 8px; }
.corner { width: 100px; height: 36px; }

.toolbar { display: flex; height: 33px; }
.nav { width: 92px; height: 30px; margin-top: 2px; }
.omnibox { width: 935px; height: 28px; margin-top: 4px; background: #fff; border: 1px solid #b5b5b5; border-top-color: #999; border-radius: 3px; display: flex; align-items: center; padding: 0 4px 1px 7px; }
.doc { width: 12px; height: 16px; }
.url { flex: 1; margin-left: 7px; font-size: 15px; line-height: 20px; }
.url em { font-style: normal; color: #6d6d6d; }
.star { width: 18px; height: 18px; }
.exts { width: 253px; height: 32px; margin-top: 2px; }
.qglyph { font: 9px "DejaVu Sans", sans-serif; }
.newtag { font: bold 10px "Liberation Sans", sans-serif; fill: #fff; }

.bookmarks { display: flex; align-items: center; height: 22px; font-size: 11px; line-height: 15px; padding-left: 9px; }
.apps { width: 13px; height: 13px; margin-right: 7px; }
.fold { width: 17px; height: 15px; margin-right: 4px; }
.groove { width: 16px; height: 16px; margin-right: 5px; }
.bm { margin-right: 17px; white-space: nowrap; }
.apps-t { margin-right: 16px; }
.cut { -webkit-mask-image: linear-gradient(to right, #000 85px, transparent 116px); mask-image: linear-gradient(to right, #000 85px, transparent 116px); }

/* page */
.page { position: relative; height: 643px; flex: none; overflow: hidden; display: flex; flex-direction: column; align-items: center; padding-top: 33px; background: repeating-linear-gradient(to right, #b0d400 0 25px, #c6df30 25px 50px); border-radius: 0 0 4px 4px; }
.frame { position: absolute; left: 0; top: 0; width: 1280px; height: 643px; }
.logo, h1, .tiles, .credit { position: relative; }
.logo { width: 464px; height: 72px; }
.mark text { font: bold 39px "DejaVu Sans", sans-serif; fill: #fff; stroke: #fff; stroke-width: 2.400px; stroke-linejoin: round; }
.mark .cap { font-size: 29.500px; }
.tagline { font: 600 14.500px "Open Sans", sans-serif; fill: #fff; }
h1 { margin-top: 8px; }
.title { width: 291px; height: 115px; overflow: visible; }
.title text { font: 900 67.500px Roboto, sans-serif; fill: #f2da00; stroke: #f2da00; stroke-width: .6px; }
.tiles { display: flex; gap: 100px; margin-top: 39px; }
.tile { width: 150px; height: 150px; border-radius: 9px; background: #5fa600; }
.tile svg { width: 150px; height: 150px; }
.credit { margin-top: 126px; }
.credit svg { width: 300px; height: 68px; overflow: visible; }
.by { font: bold 21px Roboto, sans-serif; fill: #fff; stroke: #fff; stroke-width: .4px; }
.by .lime { fill: #c2de2b; stroke: #c2de2b; }
.name { font: bold 29.500px Roboto, sans-serif; fill: #fff; stroke: #fff; stroke-width: .9px; }

/* desktop and dock */
.desktop { position: relative; height: 40px; flex: none; background: linear-gradient(rgba(10,8,20,.85) 0, rgba(10,8,20,.4) 9px, transparent 18px), linear-gradient(to right, #5580b6 0, #5c74a6 20%, #666394 50%, #55346e 72%, #6b1f3f 84%, #9c2a28 93%, #a83328 97%, #4b0a0c 100%); }
.shelf { position: absolute; left: 0; top: 0; width: 1280px; height: 40px; }
.dock { position: relative; display: flex; padding: 7px 0 0 77px; }
.dock svg { width: 26.050px; height: 26px; filter: drop-shadow(0 1px 1px rgba(0,0,0,.45)); }
.dock .divider { width: 12px; filter: none; }
.lamps { position: absolute; left: 0; bottom: 0; width: 1280px; height: 5px; }
.at { font: 12px "Open Sans", sans-serif; fill: #f3dfb0; }
.day { font: bold 11px "Open Sans", sans-serif; fill: #222; }
.ai { font: bold 13px "Open Sans", sans-serif; fill: #ffc13b; }
.sub { font: bold 13px "Open Sans", sans-serif; fill: #f28a1c; }
```
FILE: fit.js
```js
// Track each label so that it fills its slot exactly.
document.querySelectorAll('[data-w]').forEach(function (el) {
  var want = Number(el.dataset.w);
  var have = el.getBoundingClientRect().width;
  var count = el.textContent.length;
  el.style.letterSpacing = ((want - have) / count) + 'px';
});
```
